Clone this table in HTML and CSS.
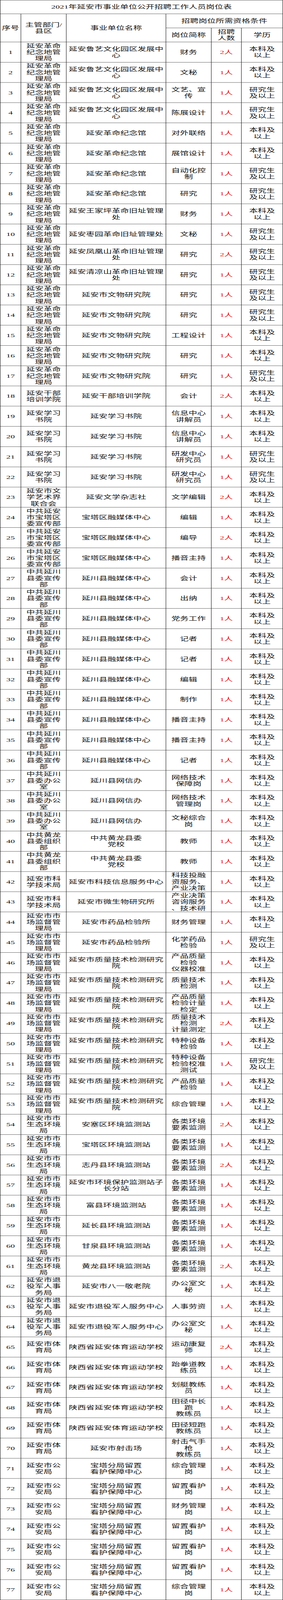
FILE: index.html
```html
<!DOCTYPE html>
<html lang="zh-CN">
<head>
<meta charset="utf-8">
<title>2021年延安市事业单位公开招聘工作人员岗位表</title>
<link rel="stylesheet" href="styles.css">
</head>
<body>
<div class="frame">
<div class="sheet">
  <div class="title">2021年延安市事业单位公开招聘工作人员岗位表</div>
  <div class="head">
    <div class="c h-no">序号</div>
    <div class="c h-dept"><span>主管部门/<br>县区</span></div>
    <div class="c h-unit">事业单位名称</div>
    <div class="c h-req">招聘岗位所需资格条件</div>
    <div class="c">岗位简称</div>
    <div class="c"><span>招聘<br>人数</span></div>
    <div class="c">学历</div>
  </div>

  <div class="row"><div class="c">1</div><div class="c">延安革命纪念地管理局</div><div class="c">延安鲁艺文化园区发展中心</div><div class="c">财务</div><div class="c red">2人</div><div class="c"><span>本科及<br>以上</span></div></div>
  <div class="row"><div class="c">2</div><div class="c">延安革命纪念地管理局</div><div class="c">延安鲁艺文化园区发展中心</div><div class="c">文秘</div><div class="c red">1人</div><div class="c"><span>本科及<br>以上</span></div></div>
  <div class="row"><div class="c">3</div><div class="c">延安革命纪念地管理局</div><div class="c">延安鲁艺文化园区发展中心</div><div class="c"><span>文艺、宣<br>传</span></div><div class="c red">1人</div><div class="c"><span>研究生<br>及以上</span></div></div>
  <div class="row"><div class="c">4</div><div class="c">延安革命纪念地管理局</div><div class="c">延安鲁艺文化园区发展中心</div><div class="c">陈展设计</div><div class="c red">1人</div><div class="c"><span>研究生<br>及以上</span></div></div>
  <div class="row"><div class="c">5</div><div class="c">延安革命纪念地管理局</div><div class="c">延安革命纪念馆</div><div class="c">对外联络</div><div class="c red">1人</div><div class="c"><span>本科及<br>以上</span></div></div>
  <div class="row"><div class="c">6</div><div class="c">延安革命纪念地管理局</div><div class="c">延安革命纪念馆</div><div class="c">展馆设计</div><div class="c red">1人</div><div class="c"><span>本科及<br>以上</span></div></div>
  <div class="row"><div class="c">7</div><div class="c">延安革命纪念地管理局</div><div class="c">延安革命纪念馆</div><div class="c"><span>自动化控<br>制</span></div><div class="c red">1人</div><div class="c"><span>研究生<br>及以上</span></div></div>
  <div class="row"><div class="c">8</div><div class="c">延安革命纪念地管理局</div><div class="c">延安革命纪念馆</div><div class="c">研究</div><div class="c red">1人</div><div class="c"><span>研究生<br>及以上</span></div></div>
  <div class="row"><div class="c">9</div><div class="c">延安革命纪念地管理局</div><div class="c">延安王家坪革命旧址管理处</div><div class="c">财务</div><div class="c red">1人</div><div class="c"><span>本科及<br>以上</span></div></div>
  <div class="row"><div class="c">10</div><div class="c">延安革命纪念地管理局</div><div class="c">延安枣园革命旧址管理处</div><div class="c">文秘</div><div class="c red">1人</div><div class="c"><span>研究生<br>及以上</span></div></div>
  <div class="row"><div class="c">11</div><div class="c">延安革命纪念地管理局</div><div class="c">延安凤凰山革命旧址管理处</div><div class="c">研究</div><div class="c red">2人</div><div class="c"><span>研究生<br>及以上</span></div></div>
  <div class="row"><div class="c">12</div><div class="c">延安革命纪念地管理局</div><div class="c">延安清凉山革命旧址管理处</div><div class="c">研究</div><div class="c red">1人</div><div class="c"><span>研究生<br>及以上</span></div></div>
  <div class="row"><div class="c">13</div><div class="c">延安革命纪念地管理局</div><div class="c">延安市文物研究院</div><div class="c">研究</div><div class="c red">1人</div><div class="c"><span>研究生<br>及以上</span></div></div>
  <div class="row"><div class="c">14</div><div class="c">延安革命纪念地管理局</div><div class="c">延安市文物研究院</div><div class="c">研究</div><div class="c red">1人</div><div class="c"><span>研究生<br>及以上</span></div></div>
  <div class="row"><div class="c">15</div><div class="c">延安革命纪念地管理局</div><div class="c">延安市文物研究院</div><div class="c">工程设计</div><div class="c red">1人</div><div class="c"><span>本科及<br>以上</span></div></div>
  <div class="row"><div class="c">16</div><div class="c">延安革命纪念地管理局</div><div class="c">延安市文物研究院</div><div class="c">研究</div><div class="c red">1人</div><div class="c"><span>本科及<br>以上</span></div></div>
  <div class="row"><div class="c">17</div><div class="c">延安革命纪念地管理局</div><div class="c">延安市文物研究院</div><div class="c">研究</div><div class="c red">1人</div><div class="c"><span>研究生<br>及以上</span></div></div>
  <div class="row"><div class="c">18</div><div class="c">延安干部培训学院</div><div class="c">延安干部培训学院</div><div class="c">会计</div><div class="c red">2人</div><div class="c"><span>本科及<br>以上</span></div></div>
  <div class="row"><div class="c">19</div><div class="c">延安学习书院</div><div class="c">延安学习书院</div><div class="c"><span>信息中心<br>讲解员</span></div><div class="c red">1人</div><div class="c"><span>本科及<br>以上</span></div></div>
  <div class="row"><div class="c">20</div><div class="c">延安学习书院</div><div class="c">延安学习书院</div><div class="c"><span>信息中心<br>讲解员</span></div><div class="c red">1人</div><div class="c"><span>本科及<br>以上</span></div></div>
  <div class="row"><div class="c">21</div><div class="c">延安学习书院</div><div class="c">延安学习书院</div><div class="c"><span>研发中心<br>研究员</span></div><div class="c red">1人</div><div class="c"><span>研究生<br>及以上</span></div></div>
  <div class="row"><div class="c">22</div><div class="c">延安学习书院</div><div class="c">延安学习书院</div><div class="c"><span>研发中心<br>研究员</span></div><div class="c red">1人</div><div class="c"><span>研究生<br>及以上</span></div></div>
  <div class="row"><div class="c">23</div><div class="c">延安市文学艺术界联合会</div><div class="c">延安文学杂志社</div><div class="c">文学编辑</div><div class="c red">2人</div><div class="c"><span>本科及<br>以上</span></div></div>
  <div class="row"><div class="c">24</div><div class="c">中共延安市宝塔区委宣传部</div><div class="c">宝塔区融媒体中心</div><div class="c">编辑</div><div class="c red">1人</div><div class="c"><span>本科及<br>以上</span></div></div>
  <div class="row"><div class="c">25</div><div class="c">中共延安市宝塔区委宣传部</div><div class="c">宝塔区融媒体中心</div><div class="c">编导</div><div class="c red">2人</div><div class="c"><span>本科及<br>以上</span></div></div>
  <div class="row"><div class="c">26</div><div class="c">中共延安市宝塔区委宣传部</div><div class="c">宝塔区融媒体中心</div><div class="c">播音主持</div><div class="c red">1人</div><div class="c"><span>本科及<br>以上</span></div></div>
  <div class="row"><div class="c">27</div><div class="c">中共延川县委宣传部</div><div class="c">延川县融媒体中心</div><div class="c">会计</div><div class="c red">1人</div><div class="c"><span>本科及<br>以上</span></div></div>
  <div class="row"><div class="c">28</div><div class="c">中共延川县委宣传部</div><div class="c">延川县融媒体中心</div><div class="c">出纳</div><div class="c red">1人</div><div class="c"><span>本科及<br>以上</span></div></div>
  <div class="row"><div class="c">29</div><div class="c">中共延川县委宣传部</div><div class="c">延川县融媒体中心</div><div class="c">党务工作</div><div class="c red">1人</div><div class="c"><span>本科及<br>以上</span></div></div>
  <div class="row"><div class="c">30</div><div class="c">中共延川县委宣传部</div><div class="c">延川县融媒体中心</div><div class="c">记者</div><div class="c red">1人</div><div class="c"><span>本科及<br>以上</span></div></div>
  <div class="row"><div class="c">31</div><div class="c">中共延川县委宣传部</div><div class="c">延川县融媒体中心</div><div class="c">记者</div><div class="c red">1人</div><div class="c"><span>本科及<br>以上</span></div></div>
  <div class="row"><div class="c">32</div><div class="c">中共延川县委宣传部</div><div class="c">延川县融媒体中心</div><div class="c">编辑</div><div class="c red">1人</div><div class="c"><span>本科及<br>以上</span></div></div>
  <div class="row"><div class="c">33</div><div class="c">中共延川县委宣传部</div><div class="c">延川县融媒体中心</div><div class="c">制作</div><div class="c red">1人</div><div class="c"><span>本科及<br>以上</span></div></div>
  <div class="row"><div class="c">34</div><div class="c">中共延川县委宣传部</div><div class="c">延川县融媒体中心</div><div class="c">播音主持</div><div class="c red">1人</div><div class="c"><span>本科及<br>以上</span></div></div>
  <div class="row"><div class="c">35</div><div class="c">中共延川县委宣传部</div><div class="c">延川县融媒体中心</div><div class="c">播音主持</div><div class="c red">1人</div><div class="c"><span>本科及<br>以上</span></div></div>
  <div class="row"><div class="c">36</div><div class="c">中共延川县委宣传部</div><div class="c">延川县融媒体中心</div><div class="c">记者</div><div class="c red">1人</div><div class="c"><span>本科及<br>以上</span></div></div>
  <div class="row"><div class="c">37</div><div class="c">中共延川县委办公室</div><div class="c">延川县网信办</div><div class="c"><span>网络技术<br>保障岗</span></div><div class="c red">1人</div><div class="c"><span>本科及<br>以上</span></div></div>
  <div class="row"><div class="c">38</div><div class="c">中共延川县委办公室</div><div class="c">延川县网信办</div><div class="c"><span>网络技术<br>管理岗</span></div><div class="c red">1人</div><div class="c"><span>本科及<br>以上</span></div></div>
  <div class="row"><div class="c">39</div><div class="c">中共延川县委办公室</div><div class="c">延川县网信办</div><div class="c"><span>文秘综合<br>岗</span></div><div class="c red">1人</div><div class="c"><span>本科及<br>以上</span></div></div>
  <div class="row"><div class="c">40</div><div class="c">中共黄龙县委组织部</div><div class="c"><span>中共黄龙县委<br>党校</span></div><div class="c">教师</div><div class="c red">1人</div><div class="c"><span>本科及<br>以上</span></div></div>
  <div class="row"><div class="c">41</div><div class="c">中共黄龙县委组织部</div><div class="c"><span>中共黄龙县委<br>党校</span></div><div class="c">教师</div><div class="c red">1人</div><div class="c"><span>本科及<br>以上</span></div></div>
  <div class="row"><div class="c">42</div><div class="c">延安市科学技术局</div><div class="c">延安市科技信息服务中心</div><div class="c"><span>科技投融<br>资服务、<br>产业决策</span></div><div class="c red">1人</div><div class="c"><span>本科及<br>以上</span></div></div>
  <div class="row"><div class="c">43</div><div class="c">延安市科学技术局</div><div class="c">延安市微生物研究所</div><div class="c"><span>产业决策<br>咨询服务<br>、技术研</span></div><div class="c red">1人</div><div class="c"><span>本科及<br>以上</span></div></div>
  <div class="row"><div class="c">44</div><div class="c">延安市市场监督管理局</div><div class="c">延安市药品检验所</div><div class="c">财务管理</div><div class="c red">1人</div><div class="c"><span>本科及<br>以上</span></div></div>
  <div class="row"><div class="c">45</div><div class="c">延安市市场监督管理局</div><div class="c">延安市药品检验所</div><div class="c"><span>化学药品<br>检验</span></div><div class="c red">1人</div><div class="c"><span>研究生<br>及以上</span></div></div>
  <div class="row"><div class="c">46</div><div class="c">延安市市场监督管理局</div><div class="c">延安市质量技术检测研究院</div><div class="c"><span>产品质量<br>检验<br>仪器校准</span></div><div class="c red">1人</div><div class="c"><span>本科及<br>以上</span></div></div>
  <div class="row"><div class="c">47</div><div class="c">延安市市场监督管理局</div><div class="c">延安市质量技术检测研究院</div><div class="c"><span>质量技术<br>检测</span></div><div class="c red">1人</div><div class="c"><span>本科及<br>以上</span></div></div>
  <div class="row"><div class="c">48</div><div class="c">延安市市场监督管理局</div><div class="c">延安市质量技术检测研究院</div><div class="c"><span>产品质量<br>检验计量<br>检定</span></div><div class="c red">1人</div><div class="c"><span>本科及<br>以上</span></div></div>
  <div class="row"><div class="c">49</div><div class="c">延安市市场监督管理局</div><div class="c">延安市质量技术检测研究院</div><div class="c"><span>质量技术<br>检测<br>计量测定</span></div><div class="c red">2人</div><div class="c"><span>本科及<br>以上</span></div></div>
  <div class="row"><div class="c">50</div><div class="c">延安市市场监督管理局</div><div class="c">延安市质量技术检测研究院</div><div class="c"><span>特种设备<br>检验</span></div><div class="c red">1人</div><div class="c"><span>本科及<br>以上</span></div></div>
  <div class="row"><div class="c">51</div><div class="c">延安市市场监督管理局</div><div class="c">延安市质量技术检测研究院</div><div class="c"><span>特种设备<br>检验校准<br>测试</span></div><div class="c red">1人</div><div class="c"><span>研究生<br>及以上</span></div></div>
  <div class="row"><div class="c">52</div><div class="c">延安市市场监督管理局</div><div class="c">延安市质量技术检测研究院</div><div class="c"><span>产品质量<br>检验</span></div><div class="c red">1人</div><div class="c"><span>本科及<br>以上</span></div></div>
  <div class="row"><div class="c">53</div><div class="c">延安市市场监督管理局</div><div class="c">延安市质量技术检测研究院</div><div class="c">综合管理</div><div class="c red">1人</div><div class="c"><span>本科及<br>以上</span></div></div>
  <div class="row"><div class="c">54</div><div class="c">延安市市生态环境局</div><div class="c">安塞区环境监测站</div><div class="c"><span>各类环境<br>要素监测</span></div><div class="c red">2人</div><div class="c"><span>本科及<br>以上</span></div></div>
  <div class="row"><div class="c">55</div><div class="c">延安市市生态环境局</div><div class="c">宝塔区环境监测站</div><div class="c"><span>各类环境<br>要素监测</span></div><div class="c red">1人</div><div class="c"><span>本科及<br>以上</span></div></div>
  <div class="row"><div class="c">56</div><div class="c">延安市市生态环境局</div><div class="c">志丹县环境监测站</div><div class="c"><span>各类环境<br>要素监测</span></div><div class="c red">2人</div><div class="c"><span>本科及<br>以上</span></div></div>
  <div class="row"><div class="c">57</div><div class="c">延安市市生态环境局</div><div class="c">延安市环境保护监测站子长分站</div><div class="c"><span>各类环境<br>要素监测</span></div><div class="c red">1人</div><div class="c"><span>本科及<br>以上</span></div></div>
  <div class="row"><div class="c">58</div><div class="c">延安市市生态环境局</div><div class="c">富县环境监测站</div><div class="c"><span>各类环境<br>要素监测</span></div><div class="c red">1人</div><div class="c"><span>本科及<br>以上</span></div></div>
  <div class="row"><div class="c">59</div><div class="c">延安市市生态环境局</div><div class="c">延长县环境监测站</div><div class="c"><span>各类环境<br>要素监测</span></div><div class="c red">1人</div><div class="c"><span>本科及<br>以上</span></div></div>
  <div class="row"><div class="c">60</div><div class="c">延安市市生态环境局</div><div class="c">甘泉县环境监测站</div><div class="c"><span>各类环境<br>要素监测</span></div><div class="c red">1人</div><div class="c"><span>本科及<br>以上</span></div></div>
  <div class="row"><div class="c">61</div><div class="c">延安市市生态环境局</div><div class="c">黄龙县环境监测站</div><div class="c"><span>各类环境<br>要素监测</span></div><div class="c red">2人</div><div class="c"><span>本科及<br>以上</span></div></div>
  <div class="row"><div class="c">62</div><div class="c">延安市退役军人事务局</div><div class="c">延安市八一敬老院</div><div class="c"><span>办公室文<br>秘</span></div><div class="c red">1人</div><div class="c"><span>本科及<br>以上</span></div></div>
  <div class="row"><div class="c">63</div><div class="c">延安市退役军人事务局</div><div class="c">延安市退役军人服务中心</div><div class="c">人事劳资</div><div class="c red">1人</div><div class="c"><span>本科及<br>以上</span></div></div>
  <div class="row"><div class="c">64</div><div class="c">延安市退役军人事务局</div><div class="c">延安市退役军人服务中心</div><div class="c"><span>办公室文<br>秘</span></div><div class="c red">1人</div><div class="c"><span>本科及<br>以上</span></div></div>
  <div class="row"><div class="c">65</div><div class="c">延安市体育局</div><div class="c">陕西省延安体育运动学校</div><div class="c"><span>运动康复<br>师</span></div><div class="c red">2人</div><div class="c"><span>本科及<br>以上</span></div></div>
  <div class="row"><div class="c">66</div><div class="c">延安市体育局</div><div class="c">陕西省延安体育运动学校</div><div class="c"><span>跆拳道教<br>练员</span></div><div class="c red">1人</div><div class="c"><span>本科及<br>以上</span></div></div>
  <div class="row"><div class="c">67</div><div class="c">延安市体育局</div><div class="c">陕西省延安体育运动学校</div><div class="c"><span>划艇教练<br>员</span></div><div class="c red">1人</div><div class="c"><span>本科及<br>以上</span></div></div>
  <div class="row"><div class="c">68</div><div class="c">延安市体育局</div><div class="c">陕西省延安体育运动学校</div><div class="c"><span>田径中长<br>跑<br>教练员</span></div><div class="c red">1人</div><div class="c"><span>本科及<br>以上</span></div></div>
  <div class="row"><div class="c">69</div><div class="c">延安市体育局</div><div class="c">陕西省延安体育运动学校</div><div class="c"><span>田径短跑<br>教练员</span></div><div class="c red">1人</div><div class="c"><span>本科及<br>以上</span></div></div>
  <div class="row"><div class="c">70</div><div class="c">延安市体育局</div><div class="c">延安市射击场</div><div class="c"><span>射击气手<br>枪<br>教练员</span></div><div class="c red">1人</div><div class="c"><span>本科及<br>以上</span></div></div>
  <div class="row"><div class="c">71</div><div class="c">延安市公安局</div><div class="c"><span>宝塔分局留置<br>看护保障中心</span></div><div class="c"><span>综合管理<br>岗</span></div><div class="c red">1人</div><div class="c"><span>本科及<br>以上</span></div></div>
  <div class="row"><div class="c">72</div><div class="c">延安市公安局</div><div class="c"><span>宝塔分局留置<br>看护保障中心</span></div><div class="c"><span>留置看护<br>岗</span></div><div class="c red">1人</div><div class="c"><span>本科及<br>以上</span></div></div>
  <div class="row"><div class="c">73</div><div class="c">延安市公安局</div><div class="c"><span>宝塔分局留置<br>看护保障中心</span></div><div class="c"><span>财务管理<br>岗</span></div><div class="c red">1人</div><div class="c"><span>本科及<br>以上</span></div></div>
  <div class="row"><div class="c">74</div><div class="c">延安市公安局</div><div class="c"><span>宝塔分局留置<br>看护保障中心</span></div><div class="c"><span>留置看护<br>岗</span></div><div class="c red">1人</div><div class="c"><span>本科及<br>以上</span></div></div>
  <div class="row"><div class="c">75</div><div class="c">延安市公安局</div><div class="c"><span>宝塔分局留置<br>看护保障中心</span></div><div class="c"><span>留置看护<br>岗</span></div><div class="c red">1人</div><div class="c"><span>本科及<br>以上</span></div></div>
  <div class="row"><div class="c">76</div><div class="c">延安市公安局</div><div class="c"><span>宝塔分局留置<br>看护保障中心</span></div><div class="c"><span>留置看护<br>岗</span></div><div class="c red">1人</div><div class="c"><span>本科及<br>以上</span></div></div>
  <div class="row"><div class="c">77</div><div class="c">延安市公安局</div><div class="c"><span>宝塔分局留置<br>看护保障中心</span></div><div class="c"><span>综合管理<br>岗</span></div><div class="c red">1人</div><div class="c"><span>本科及<br>以上</span></div></div>
</div>
</div>
<script src="app.js"></script>
</body>
</html>
```

FILE: styles.css
```css
:root {
  --sy: 1;
}

html, body {
  margin: 0;
  padding: 0;
  background: #fff;
}

body {
  font-family: "Liberation Serif", "Noto Sans CJK SC", serif;
  font-size: 22px;
  line-height: 27px;
  color: #111;
}

/* The sheet is drawn at its natural 724 x 6801 size; when the window is
   shorter than that, it is squeezed vertically so the whole table stays in view. */
.frame {
  width: 724px;
  height: calc(6801px * var(--sy));
  overflow: hidden;
}

.sheet {
  width: 724px;
  box-sizing: border-box;
  border-left: 1px solid #000;
  border-top: 1px solid #000;
  transform: scaleY(var(--sy));
  transform-origin: 0 0;
}

.title {
  height: 58px;
  box-sizing: border-box;
  border-right: 1px solid #000;
  border-bottom: 1px solid #000;
  display: flex;
  align-items: center;
  justify-content: center;
}

.head,
.row {
  display: grid;
  grid-template-columns: 53px 116px 255px 116px 77px 106px;
}

.head {
  grid-template-rows: 60px 60px;
}

.row {
  height: 86px;
  grid-template-rows: 86px;
}

.c {
  box-sizing: border-box;
  min-width: 0;
  min-height: 0;
  border-right: 1px solid #000;
  border-bottom: 1px solid #000;
  display: flex;
  align-items: center;
  justify-content: center;
  text-align: center;
  padding: 0 2px;
}

.row .c:nth-child(2) {
  padding: 0 6px;
}

.row .c:nth-child(3) {
  padding: 0 4px;
}

.row .c:nth-child(4) {
  padding: 0 5px;
}

.h-no,
.h-dept,
.h-unit {
  grid-row: 1 / 3;
}

.h-req {
  grid-column: 4 / 7;
}

.red {
  color: #e01010;
}
```

FILE: app.js
```js
(function () {
  var full = 6801;
  var s = Math.min(1, window.innerHeight / full);
  document.documentElement.style.setProperty('--sy', String(s));
})();
```
